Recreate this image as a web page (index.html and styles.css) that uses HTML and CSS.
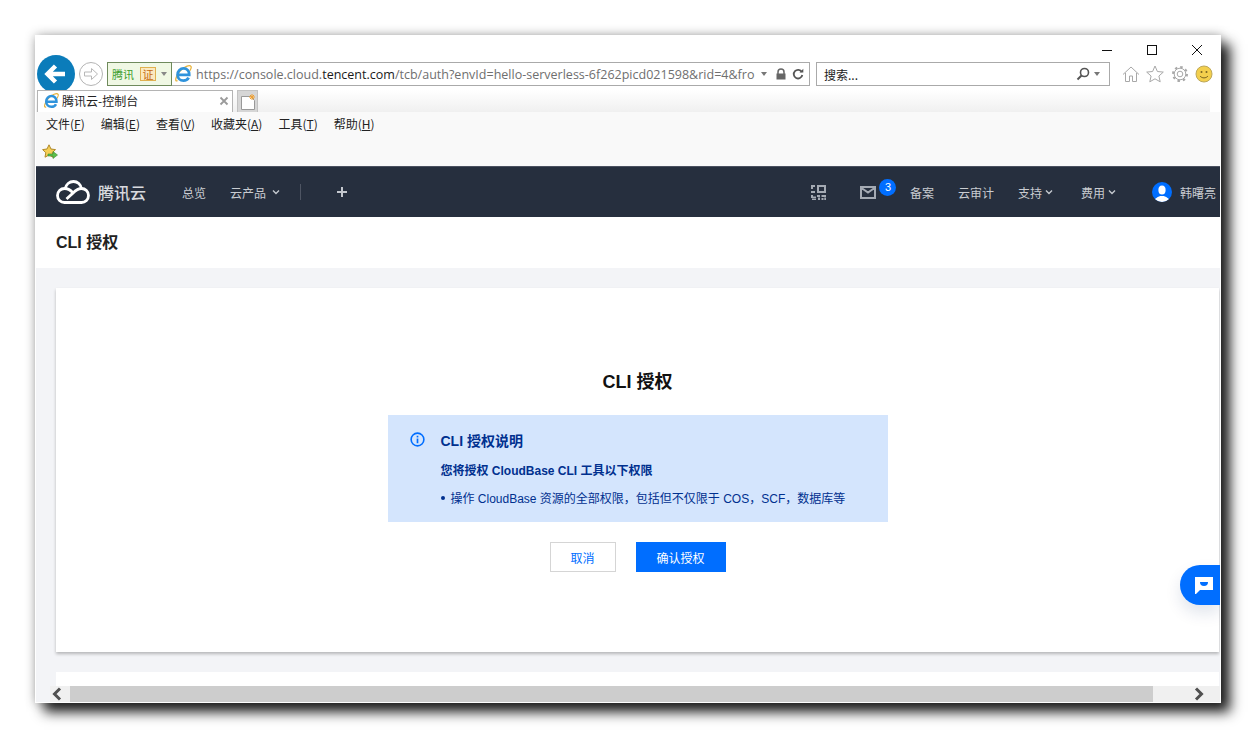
FILE: index.html
```html
<!DOCTYPE html>
<html lang="zh">
<head>
<meta charset="utf-8">
<title>腾讯云-控制台</title>
<link rel="stylesheet" href="styles.css">
</head>
<body>
<svg class="defs" width="0" height="0">
  <symbol id="ie" viewBox="0 0 18 18">
    <path d="M3.500 15.500C.8 17.500 1 12 5.500 6.500 10 1.500 15.800-.5 17 1.500c.7 1.200-.3 3-1.300 4.500" fill="none" stroke="#e8b23a" stroke-width="1.300"/>
    <path d="M4.200 9.800h11c.2-3.800-2.400-6.400-5.600-6.400-3.300 0-6 2.900-6 6.300 0 3.500 2.700 5.900 5.800 5.900 2.400 0 4.300-1.100 5.200-3" fill="none" stroke="#2f93dc" stroke-width="2.800"/>
  </symbol>
</svg>
<div class="window">
  <div class="caption">
    <svg class="ctl" viewBox="0 0 12 12"><path d="M1 6.500h10" stroke="#111" fill="none"/></svg>
    <svg class="ctl" viewBox="0 0 12 12"><rect x="1.500" y="1.500" width="9" height="9" stroke="#111" fill="none"/></svg>
    <svg class="ctl" viewBox="0 0 12 12"><path d="M1 1l10 10M11 1L1 11" stroke="#111" fill="none"/></svg>
  </div>
  <div class="addr-row">
    <svg class="back" viewBox="0 0 38 38"><circle cx="19" cy="19" r="19" fill="#0b7cba"/><path d="M28 19H11M18.500 11l-8 8 8 8" fill="none" stroke="#fff" stroke-width="4.500"/></svg>
    <svg class="forward" viewBox="0 0 24 24"><circle cx="12" cy="12" r="11.500" fill="#fff" stroke="#b4b4b4"/><path d="M5.500 10h7V6.500l6 5.500-6 5.500V14h-7z" fill="#fff" stroke="#b8b8b8"/></svg>
    <div class="addr">
      <div class="cert"><span class="cert-name">腾讯</span><span class="cert-tag">证</span><span class="tri"></span></div>
      <svg class="ie" viewBox="0 0 18 18"><use href="#ie"/></svg>
      <div class="url">https://console.cloud.<b>tencent.com</b>/tcb/auth?envId=hello-serverless-6f262picd021598&amp;rid=4&amp;fro</div>
      <span class="tri url-tri"></span>
      <svg class="lock" viewBox="0 0 12 12"><path d="M3 6V4a3 3 0 0 1 6 0v2" fill="none" stroke="#666" stroke-width="1.500"/><rect x="1.500" y="5.500" width="9" height="6" fill="#666"/></svg>
      <svg class="reload" viewBox="0 0 12 12"><path d="M9.800 4A4.300 4.300 0 1 0 10.300 7" fill="none" stroke="#555" stroke-width="1.800"/><path d="M7.500 4.500h3.800V.8z" fill="#555"/></svg>
    </div>
    <div class="search">
      <span class="search-text">搜索...</span>
      <svg class="loupe" viewBox="0 0 14 14"><circle cx="8.500" cy="5.500" r="4" fill="none" stroke="#555" stroke-width="1.600"/><path d="M5.500 8.500L1.500 12.500" stroke="#555" stroke-width="2"/></svg>
      <span class="tri"></span>
    </div>
    <div class="tools">
      <svg class="tool" viewBox="0 0 18 18"><path d="M1 9.500L9 2l8 7.500M3.500 8v8.500h4V11h3v5.500h4V8" fill="none" stroke="#a8a8a8"/></svg>
      <svg class="tool" viewBox="0 0 18 18"><path d="M9 1l2.400 5.500 5.900.6-4.400 3.900 1.300 5.800L9 13.800l-5.200 3 1.300-5.800L.7 7.100l5.900-.6z" fill="none" stroke="#a8a8a8"/></svg>
      <svg class="tool" viewBox="0 0 18 18"><circle cx="9" cy="9" r="2.800" fill="none" stroke="#a8a8a8"/><circle cx="9" cy="9" r="5.800" fill="none" stroke="#a8a8a8" stroke-width="1"/><circle cx="9" cy="9" r="7" fill="none" stroke="#a8a8a8" stroke-width="2" stroke-dasharray="2.500 3"/></svg>
      <svg class="tool" viewBox="0 0 18 18"><circle cx="9" cy="9" r="8" fill="#f3cf4d" stroke="#bda85a"/><circle cx="6.500" cy="7" r="1" fill="#7a6420"/><circle cx="11.500" cy="7" r="1" fill="#7a6420"/><path d="M5 11c2 2.500 6 2.500 8 0" fill="none" stroke="#7a6420"/></svg>
    </div>
  </div>
  <div class="tab-row">
    <div class="tab">
      <svg class="tab-ie" viewBox="0 0 18 18"><use href="#ie"/></svg>
      <span class="tab-title">腾讯云-控制台</span>
      <svg class="tab-close" viewBox="0 0 10 10"><path d="M1.500 1.500l7 7M8.500 1.500l-7 7" stroke="#9a9a9a" stroke-width="1.800"/></svg>
    </div>
    <div class="new-tab">
      <svg viewBox="0 0 16 18" width="16" height="18"><path d="M1.500 3.500h9l4 4v9h-13z" fill="#fff" stroke="#999"/><path d="M12 1v6M9 4h6M10 2l4 4M14 2l-4 4" stroke="#f0a030"/></svg>
    </div>
  </div>
  <div class="menu-row">
    <span class="menu-item">文件(<u>F</u>)</span>
    <span class="menu-item">编辑(<u>E</u>)</span>
    <span class="menu-item">查看(<u>V</u>)</span>
    <span class="menu-item">收藏夹(<u>A</u>)</span>
    <span class="menu-item">工具(<u>T</u>)</span>
    <span class="menu-item">帮助(<u>H</u>)</span>
  </div>
  <div class="fav-row">
    <svg class="fav" viewBox="0 0 16 16"><path d="M7 .8l2 4.200 4.500.6-3.200 3.100.8 4.500L7 11l-4 2.200.8-4.500L.6 5.600 5 5z" fill="#f6cf55" stroke="#b08a2a"/><path d="M6 10h5V7.500l4.500 3.500-4.500 3.500V12H6z" fill="#5cc04a" stroke="#3d8a32" stroke-width=".6"/></svg>
  </div>
  <div class="nav">
    <svg class="logo" viewBox="0 0 34 24"><path d="M9 9C10 4.500 13.500 1.500 17.500 1.500S25 4.500 25.500 9" fill="none" stroke="#fff" stroke-width="2.800"/><path d="M10.500 19L17 13C15 10.500 12.500 8.500 8.500 8.500a7 7 0 0 0 0 14h17a7 7 0 0 0 0-14c-3.500 0-6.500 2.500-8.500 4.500" fill="none" stroke="#fff" stroke-width="2.800"/></svg>
    <span class="brand">腾讯云</span>
    <span class="nav-link first">总览</span>
    <span class="nav-link">云产品</span>
    <svg class="caret" viewBox="0 0 8 6"><path d="M1 1.500l3 3 3-3" fill="none" stroke="#c4c8ce" stroke-width="1.400"/></svg>
    <span class="sep"></span>
    <svg class="plus" viewBox="0 0 12 12"><path d="M6 1v10M1 6h10" stroke="#c4c8ce" stroke-width="2"/></svg>
    <span class="spacer"></span>
    <svg class="qr" viewBox="0 0 15 15"><path d="M0 0h4v2H2v2H0zM6 0h9v8H6zM8 2v4h5V2zM0 6h4v2H0zM0 10h2v1.500h3V13H0zM6 10h3v2H6zM10.500 10H15v2h-4.500zM1 13.500h4V15H1zM7 12.500h2V15H7zM10.500 13h2v2h-2zM13.300 12.500H15V15h-1.700z" fill="#a4aab3"/></svg>
    <span class="mail-wrap">
      <svg class="mail" viewBox="0 0 16 13"><path d="M1 1h14v11H1zM1.500 2L8 6.500 14.500 2" fill="none" stroke="#a4aab3" stroke-width="2"/></svg>
      <span class="badge">3</span>
    </span>
    <span class="nav-link">备案</span>
    <span class="nav-link gap24">云审计</span>
    <span class="nav-link gap24">支持</span>
    <svg class="caret caret-tight" viewBox="0 0 8 6"><path d="M1 1.500l3 3 3-3" fill="none" stroke="#c4c8ce" stroke-width="1.400"/></svg>
    <span class="nav-link gap28">费用</span>
    <svg class="caret caret-tight" viewBox="0 0 8 6"><path d="M1 1.500l3 3 3-3" fill="none" stroke="#c4c8ce" stroke-width="1.400"/></svg>
    <svg class="avatar" viewBox="0 0 20 20"><defs><clipPath id="av"><circle cx="10" cy="10" r="10"/></clipPath></defs><circle cx="10" cy="10" r="10" fill="#006eff"/><g clip-path="url(#av)" fill="#fff"><ellipse cx="10" cy="8" rx="3.600" ry="4.500"/><path d="M2 20c.5-4 4-5 6-6h4c2 1 5.500 2 6 6z"/></g></svg>
    <span class="user">韩曙亮</span>
  </div>
  <div class="page-head">CLI 授权</div>
  <div class="main">
    <div class="card">
      <h1 class="card-title">CLI 授权</h1>
      <div class="alert">
        <svg class="info" viewBox="0 0 16 16"><circle cx="8" cy="8" r="6.800" fill="none" stroke="#006eff" stroke-width="1.700"/><rect x="7.100" y="4" width="1.800" height="1.800" fill="#006eff"/><rect x="7.100" y="7" width="1.800" height="5" fill="#006eff"/></svg>
        <div class="alert-body">
          <div class="alert-title">CLI 授权说明</div>
          <div class="alert-sub">您将授权 CloudBase CLI 工具以下权限</div>
          <div class="alert-item">操作 CloudBase 资源的全部权限，包括但不仅限于 COS，SCF，数据库等</div>
        </div>
      </div>
      <div class="actions">
        <button class="btn btn-ghost">取消</button>
        <button class="btn btn-primary">确认授权</button>
      </div>
    </div>
    <div class="card-next"></div>
    <div class="fab">
      <svg viewBox="0 0 18 18" width="18" height="18"><path d="M0 1h18v13H5l-4 4H0z" fill="#fff"/><path d="M5 6h8a4 4 0 0 1-8 0z" fill="#006eff"/></svg>
    </div>
  </div>
  <div class="hscroll">
    <div class="sb-btn sb-left"><svg viewBox="0 0 10 14" width="12" height="14"><path d="M8 1.500L2.500 7 8 12.500" fill="none" stroke="#505050" stroke-width="3"/></svg></div>
    <div class="sb-thumb"></div>
    <div class="sb-btn sb-right"><svg viewBox="0 0 10 14" width="12" height="14"><path d="M2 1.500L7.500 7 2 12.500" fill="none" stroke="#505050" stroke-width="3"/></svg></div>
  </div>
</div>
</body>
</html>
```
FILE: styles.css
```css
* { box-sizing: border-box; }
html, body { margin: 0; padding: 0; background: #fff; }
body {
  height: 738px;
  overflow: hidden;
  padding: 35px 0 0 35px;
  font-family: "Liberation Sans", "Noto Sans CJK SC", sans-serif;
}
.defs { position: absolute; }
.window {
  width: 1186px;
  height: 668px;
  background: #fff;
  padding: 0 1px 1px;
  display: flex;
  flex-direction: column;
  box-shadow: 9px 9px 12px #1e1e1e, 0 0 10px rgba(0,0,0,.3);
  overflow: hidden;
  position: relative;
}
.caption {
  height: 27px;
  flex: none;
  display: flex;
  justify-content: flex-end;
  align-items: flex-start;
  gap: 33px;
  padding: 9px 17px 0 0;
}
.ctl { width: 12px; height: 12px; }
.addr-row {
  height: 24px;
  flex: none;
  display: flex;
  align-items: center;
  padding-left: 1px;
}
.back { width: 38px; height: 38px; flex: none; margin: 0 4px 0 0; }
.forward { width: 24px; height: 24px; flex: none; margin-right: 4px; }
.addr {
  width: 703px;
  height: 24px;
  flex: none;
  border: 1px solid #aaa;
  display: flex;
  align-items: center;
  font-family: "Open Sans", "Noto Sans CJK SC", sans-serif;
}
.cert {
  width: 65px;
  height: 24px;
  margin: -1px 0 0 -1px;
  flex: none;
  background: #f0f8e4;
  border: 1px solid #6f8a5c;
  display: flex;
  align-items: center;
  padding-left: 4px;
  font-size: 11px;
}
.cert-name { color: #3f9e2c; font-family: "Noto Sans CJK SC", sans-serif; width: 25px; }
.cert-tag {
  width: 16px; height: 14px; margin-left: 3px;
  background: #fbe9c0; border: 1px solid #e0b050; color: #c56a10;
  font: 11px/12px "Noto Sans CJK SC", sans-serif; text-align: center;
}
.tri {
  width: 0; height: 0; flex: none;
  border-left: 3.500px solid transparent;
  border-right: 3.500px solid transparent;
  border-top: 4px solid #777;
}
.cert .tri { margin-left: 5px; border-top-color: #888; }
.ie { width: 18px; height: 18px; flex: none; margin: 0 4px 0 2px; }
.url {
  font-size: 12.530px;
  color: #6f6f6f;
  white-space: nowrap;
  width: 560px;
  flex: none;
}
.url b { font-weight: 400; color: #1a1a1a; }
.url-tri { margin-left: 5px; }
.lock { width: 12px; height: 12px; margin-left: 8px; flex: none; }
.reload { width: 12px; height: 12px; margin-left: 5px; flex: none; }
.search {
  width: 294px;
  height: 24px;
  flex: none;
  margin-left: 6px;
  border: 1px solid #aaa;
  display: flex;
  align-items: center;
  padding: 0 9px 0 7px;
}
.search-text { font: 12px "Noto Sans CJK SC", sans-serif; color: #222; flex: 1; }
.loupe { width: 14px; height: 14px; margin-right: 4px; }
.tools { display: flex; gap: 6.300px; margin-left: 12px; align-items: center; }
.tool { width: 18px; height: 18px; flex: none; }
.tab-row {
  height: 22px;
  margin-top: 4px;
  flex: none;
  display: flex;
  padding-left: 1px;
  background: linear-gradient(#fff, #f0f0f0);
  margin-right: 10px;
}
.tab {
  width: 196px;
  height: 22px;
  background: #fff;
  border: 1px solid #b4b4b4;
  border-bottom: 0;
  display: flex;
  align-items: center;
  padding: 0 3px 2px 5px;
}
.tab-ie { width: 16px; height: 16px; flex: none; }
.tab-title { font: 12px "Noto Sans CJK SC", sans-serif; color: #222; margin-left: 3px; flex: 1; }
.tab-close { width: 10px; height: 10px; margin-right: 0; }
.new-tab {
  width: 21px;
  height: 22px;
  margin-left: 4px;
  background: #d6d6d6;
  border: 1px solid #c2c2c2;
  border-bottom: 0;
  display: flex;
  align-items: center;
  justify-content: center;
}
.menu-row {
  height: 26px;
  flex: none;
  background: #f9f9f9;
  display: flex;
  align-items: center;
  padding: 0 0 4px 10px;
  gap: 16px;
  font: 12px "Noto Sans CJK SC", sans-serif;
  color: #222;
}
.menu-item { white-space: nowrap; }
.fav-row {
  height: 28px;
  flex: none;
  background: #f9f9f9;
  display: flex;
  align-items: center;
  padding-left: 6px;
}
.fav { width: 16px; height: 16px; }
.nav {
  height: 51px;
  flex: none;
  background: #262f3e;
  border-top: 1px solid #4a5160;
  display: flex;
  align-items: center;
  padding: 0 3px 0 20px;
  color: #c9ccd1;
  font: 12px "Noto Sans CJK SC", sans-serif;
  white-space: nowrap;
}
.logo { width: 34px; height: 24px; flex: none; }
.brand { font-size: 16px; font-weight: 500; color: #d8dadf; margin-left: 8px; width: 48px; }
.nav-link { flex: none; }
.nav-link.first { margin: 0 24px 0 36px; }
.caret { width: 8px; height: 6px; margin-left: 6px; flex: none; }
.caret-tight { margin-left: 3px; }
.sep { width: 1px; height: 16px; background: #4e5563; margin-left: 20px; flex: none; }
.plus { width: 12px; height: 12px; margin-left: 35px; flex: none; }
.spacer { flex: 1; }
.qr { width: 15px; height: 15px; flex: none; }
.mail-wrap { position: relative; width: 16px; height: 13px; margin: 0 34px 0 34px; flex: none; display: block; }
.mail { width: 16px; height: 13px; display: block; }
.badge {
  position: absolute;
  left: 19.500px;
  top: -7px;
  width: 17px;
  height: 17px;
  border-radius: 50%;
  background: #006eff;
  color: #fff;
  font: 11px/17px "Liberation Sans", sans-serif;
  text-align: center;
}
.gap24 { margin-left: 24px; }
.gap28 { margin-left: 28px; }
.avatar { width: 20px; height: 20px; margin-left: 36px; flex: none; }
.user { margin-left: 8px; width: 37px; flex: none; }
.page-head {
  height: 51px;
  flex: none;
  display: flex;
  align-items: center;
  padding: 0 0 4px 20px;
  font: 700 16px "Liberation Sans", "Noto Sans CJK SC", sans-serif;
  color: #222;
  background: #fff;
}
.main {
  position: relative;
  flex: 1;
  min-height: 0;
  background: #f3f4f7;
  padding: 20px 1px 0 20px;
  overflow: hidden;
}
.card {
  height: 364px;
  background: #fff;
  box-shadow: 0 2px 3px rgba(0,0,0,.25);
  display: flex;
  flex-direction: column;
  align-items: center;
  padding-top: 81px;
}
.card-title {
  margin: 0 0 20px;
  font: 700 18px/26px "Liberation Sans", "Noto Sans CJK SC", sans-serif;
  color: #111;
}
.alert {
  width: 500px;
  height: 107px;
  background: #d4e5fd;
  display: flex;
  gap: 16px;
  padding: 16px 0 0 22px;
  color: #00308f;
}
.info { width: 15px; height: 15px; flex: none; margin-top: 1px; }
.alert-title { font-size: 14px; line-height: 20px; font-weight: 700; }
.alert-sub { font-size: 12px; line-height: 18px; font-weight: 700; margin-top: 11px; }
.alert-item { font-size: 12px; line-height: 18px; margin-top: 10px; white-space: nowrap; position: relative; padding-left: 10px; }
.alert-item::before {
  content: "";
  position: absolute;
  left: 0;
  top: 6px;
  width: 4px;
  height: 4px;
  border-radius: 50%;
  background: #00308f;
}
.actions { display: flex; gap: 20px; margin-top: 20px; }
.btn {
  height: 30px;
  font: 12px "Noto Sans CJK SC", sans-serif;
  padding: 0;
  border-radius: 0;
}
.btn-ghost { width: 66px; background: #fff; border: 1px solid #d5d5d5; color: #006eff; }
.btn-primary { width: 90px; background: #006eff; border: 1px solid #006eff; color: #fff; }
.card-next { height: 40px; margin-top: 20px; background: #fff; }
.fab {
  position: absolute;
  right: 0;
  top: 297px;
  width: 40px;
  height: 40px;
  background: #006eff;
  border-radius: 20px 0 0 20px;
  display: flex;
  align-items: center;
  justify-content: center;
  padding-left: 8px;
  box-shadow: 0 8px 16px rgba(0,40,100,.12);
}
.hscroll {
  height: 16px;
  flex: none;
  display: flex;
  background: #f0f0f0;
}
.sb-btn { display: flex; align-items: center; }
.sb-left { width: 34px; padding-left: 15px; background: linear-gradient(90deg, #f3f4f7 40%, #f0f0f0 40%); }
.sb-thumb { width: 1083px; background: #cdcdcd; }
.sb-right { flex: 1; justify-content: flex-end; padding-right: 15px; }
```
